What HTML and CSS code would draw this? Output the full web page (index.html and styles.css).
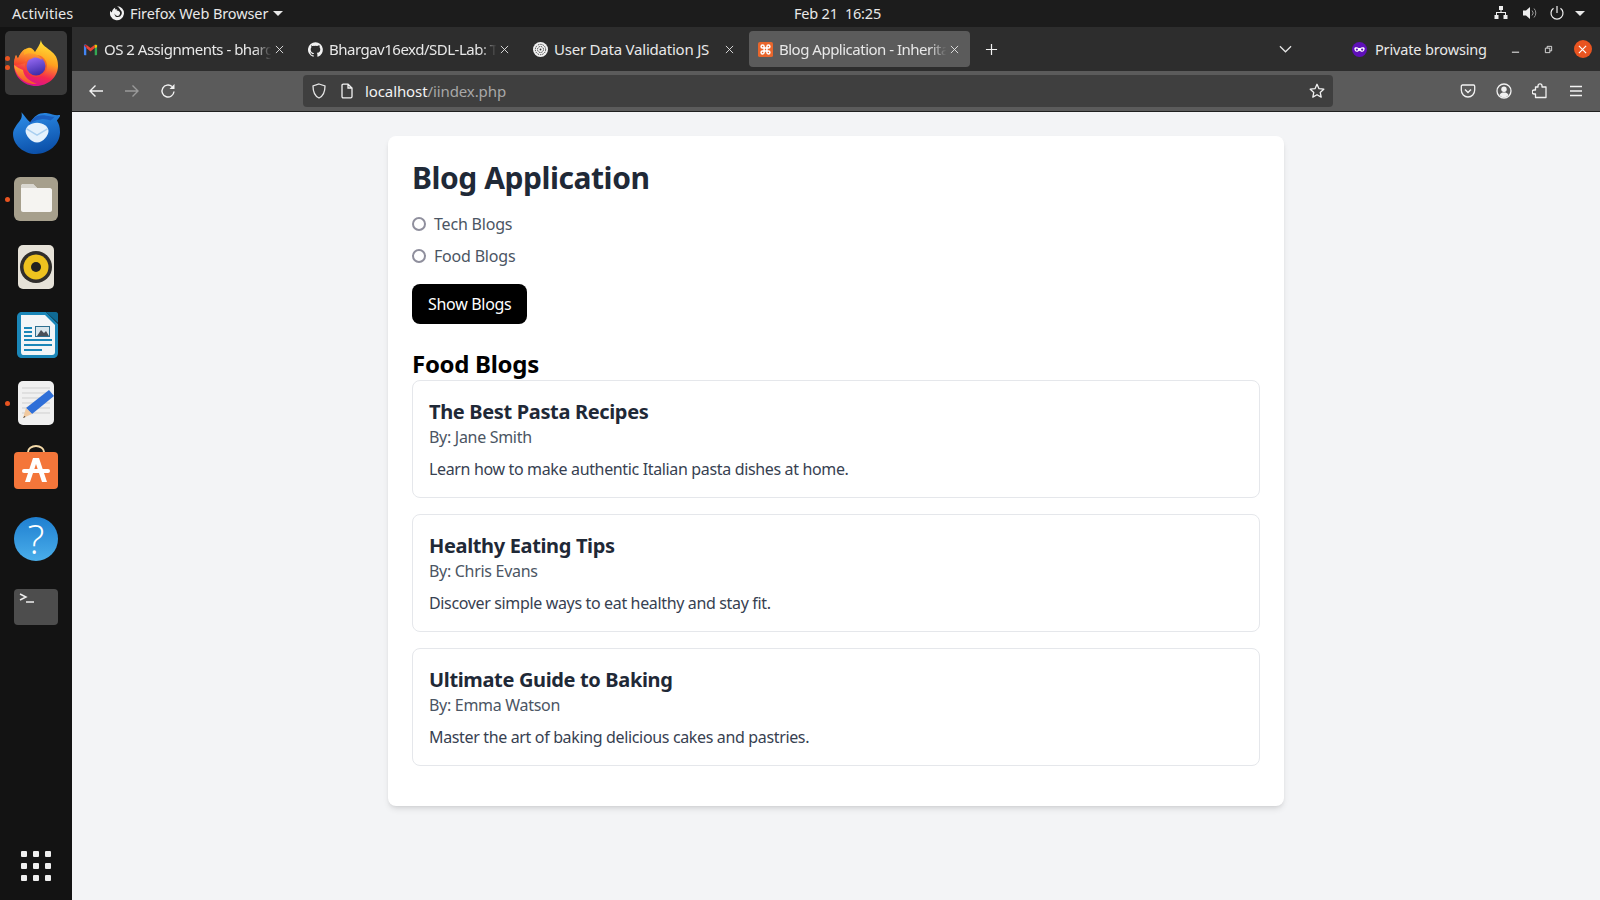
FILE: index.html
```html
<!DOCTYPE html>
<html lang="en">
<head>
  <meta charset="UTF-8">
  <meta name="viewport" content="width=device-width, initial-scale=1.0">
  <title>Blog Application</title>
  <link rel="stylesheet" href="styles.css">
</head>
<body>

  <!-- Ubuntu top bar -->
  <header class="topbar">
    <span class="activities">Activities</span>
    <span class="app-menu">
      <svg class="app-icon" viewBox="0 0 16 16"><path fill="#f2f2f2" d="M8 1.200a7 7 0 1 1-6.600 4.600c.3.900.8 1.400 1.500 1.700C2.900 5.600 4 3.400 6.400 2.400 6 3.200 6 3.900 6.300 4.500c.8-.4 1.700-.5 2.400-.2-.5.100-1 .4-1.300.8.4.5 1.100.7 1.900.6a2.700 2.700 0 1 1-3.600 2.900C5.400 11 7 12 8.600 12A4 4 0 0 0 11.400 5C10.700 3.400 9.500 2 8 1.200z"/></svg>
      Firefox Web Browser
      <i class="caret"></i>
    </span>
    <span class="clock">Feb 21&nbsp; 16:25</span>
    <span class="tray">
      <svg class="tray-net" viewBox="0 0 16 16"><path fill="#eee" d="M6 1h4v4H8.500v2H13v3h1.500v4h-4v-4H12V8H4v2h1.500v4h-4v-4H3V7h4.500V5H6z"/></svg>
      <svg class="tray-vol" viewBox="0 0 16 16"><path fill="#eee" d="M1 5.500h3L8 2v12l-4-3.500H1z"/><path fill="none" stroke="#999" d="M10 5.500a3.500 3.500 0 0 1 0 5M12 3.500a6.500 6.500 0 0 1 0 9"/></svg>
      <svg class="tray-power" viewBox="0 0 16 16"><path fill="none" stroke="#eee" stroke-width="1.200" d="M4.500 3.300a6 6 0 1 0 7 0M8 1v7"/></svg>
      <i class="caret"></i>
    </span>
  </header>

  <div class="desktop">

    <!-- Dock -->
    <nav class="dock">
      <div class="dock-item active">
        <i class="dot dot-a"></i><i class="dot dot-b"></i>
        <svg width="48" height="48" viewBox="0 0 48 48">
          <defs>
            <linearGradient id="ffa" x1="0.700" y1="0" x2="0.400" y2="1"><stop offset="0" stop-color="#ffe83a"/><stop offset="0.450" stop-color="#ffa01f"/><stop offset="0.750" stop-color="#f4284f"/><stop offset="1" stop-color="#d60f96"/></linearGradient>
            <linearGradient id="ffb" x1="0.300" y1="0" x2="0.600" y2="1"><stop offset="0" stop-color="#9a6cf5"/><stop offset="1" stop-color="#3a2aa6"/></linearGradient>
            <linearGradient id="ffc" x1="0.500" y1="0" x2="0.200" y2="1"><stop offset="0" stop-color="#ffb82e"/><stop offset="1" stop-color="#f5402c"/></linearGradient>
          </defs>
          <path fill="url(#ffa)" d="M29 1c0 5 7 8 11 12 5 4 6 9 6 14 0 11-10 20-22 20S2 38 2 26c0-4 .5-7 2-10l2 4c2-6 6-10 10-11 3-1 5 1 7 4 2-4 5-7 6-12z"/>
          <circle cx="24" cy="27" r="11" fill="#f1492c" opacity="0.600"/>
          <circle cx="24" cy="27" r="9.500" fill="url(#ffb)"/>
          <path fill="url(#ffc)" d="M2 26c0-4 1-7 2-10l2 4c1-4 4-8 7-10-1 2-1 4-1 6 3-2 7-2 11-1 3 1 6 3 7 6-3-2-6-3-9-2-2 1-4 2-8 2 2 1 2 2 1 3-4 1-8 2-12 2z"/>
          <path fill="url(#ffc)" d="M2 26c1 8 6 15 14 18 3 1 6 1 9 1-8-3-13-7-14-14-3-1-6-3-9-5z"/>
        </svg>
      </div>
      <div class="dock-item">
        <svg width="48" height="48" viewBox="1 2 46 46">
          <defs><linearGradient id="tb" x1="0.200" y1="0" x2="0.500" y2="1"><stop offset="0" stop-color="#2d8ee9"/><stop offset="1" stop-color="#0b4fa8"/></linearGradient></defs>
          <path fill="url(#tb)" d="M10 7c1 4 0 6-2 9-4 5-6 8-6 12 0 10 10 19 22 19s23-9 23-21c0-5-1-8-3-11 2-2 3-4 4-6-4 2-8 0-13-1-7-1-13 2-16 9C15 14 13 10 10 7z"/>
          <path fill="#1b5fc0" d="M17 19c3-7 9-10 15-9 4 .5 7 2 10 1-2 2-3 3-4 4-3-1-6-2-10-1-4 .5-8 2-11 5z"/>
          <path fill="#e4f1fc" d="M14 25c0-4 5-8 11-8s11 4 11 8-5 11-11 11-11-7-11-11z"/>
          <path fill="none" stroke="#a9cff0" stroke-width="1.500" d="M15 23l10 6 10-6"/>
        </svg>
      </div>
      <div class="dock-item">
        <i class="dot dot-c"></i>
        <svg width="48" height="48" viewBox="0 0 48 48">
          <rect x="2" y="2" width="44" height="44" rx="6" fill="#a69f8c"/>
          <path fill="#f5f4f1" d="M9 11c0-1 1-2 2-2h10l4 4h13c1 0 2 1 2 2v20c0 1-1 2-2 2H11c-1 0-2-1-2-2z"/>
          <path fill="#d9d7d0" d="M9 13h16l-4-4H11c-1 0-2 1-2 2z"/>
        </svg>
      </div>
      <div class="dock-item">
        <svg width="48" height="48" viewBox="0 0 48 48">
          <rect x="6" y="2" width="36" height="44" rx="5" fill="#e6e2d8"/>
          <circle cx="24" cy="24" r="16" fill="#302e2b"/>
          <circle cx="24" cy="24" r="12.500" fill="#eec21f"/>
          <circle cx="24" cy="24" r="5" fill="#232220"/>
        </svg>
      </div>
      <div class="dock-item">
        <svg width="48" height="48" viewBox="0 0 48 48">
          <path fill="#1a86b8" d="M10 1h24l12 12v29c0 3-2 5-5 5H10c-3 0-5-2-5-5V6c0-3 2-5 5-5z"/>
          <path fill="#f2f5f7" d="M9 4h24l10 10v27c0 2-1 3-3 3H11c-1 0-2-1-2-3z"/>
          <path fill="#0f6a94" d="M34 1h10c1 0 2 1 2 2v9z"/>
          <path fill="#1a86b8" d="M12 16h8v2h-8zM12 20h8v2h-8zM12 24h8v2h-8zM12 28h28v2H12zM12 33h28v2H12zM12 38h18v2H12z"/>
          <rect x="23" y="15" width="15" height="11" fill="#2d6f90"/>
          <rect x="24" y="16" width="13" height="9" fill="#d9e6ec"/>
          <path fill="#4a5058" d="M25 25l4-6 3 3 2-2 3 5z"/>
        </svg>
      </div>
      <div class="dock-item">
        <i class="dot dot-c"></i>
        <svg width="48" height="48" viewBox="0 0 48 48">
          <rect x="6" y="2" width="36" height="44" rx="5" fill="#f0f0f0"/>
          <path stroke="#cfcfcf" stroke-width="1" d="M10 9h28M10 14h28M10 19h28M10 24h28M10 29h28M10 34h28"/>
          <path fill="#2f6fd8" d="M37 11l5 6-22 18-6-6z"/>
          <path fill="#f0c9a0" d="M14 29l6 6-9 4z"/>
          <path fill="#333" d="M12.500 37l-1.500 2 2.500-1z"/>
        </svg>
      </div>
      <div class="dock-item">
        <svg class="store-icon" width="48" height="48" viewBox="0 4 48 48">
          <path fill="none" stroke="#f4d9a8" stroke-width="2" d="M16 13V9a8 6 0 0 1 16 0v4"/>
          <rect x="2" y="9" width="44" height="37" rx="4" fill="#f4763a"/>
          <path fill="#fff" d="M21 15h6l8 24h-5l-6-18-6 18h-5z"/>
          <rect x="10" y="26" width="28" height="4" rx="2" fill="#fff"/>
        </svg>
      </div>
      <div class="dock-item">
        <span class="help-icon">?</span>
      </div>
      <div class="dock-item">
        <svg width="48" height="48" viewBox="0 0 48 48">
          <rect x="2" y="6" width="44" height="36" rx="4" fill="#4d4d4d"/>
          <path fill="none" stroke="#eee" stroke-width="1.500" d="M8 11l6 3-6 3M14 19h8"/>
        </svg>
      </div>
      <div class="dock-apps">
        <i></i><i></i><i></i><i></i><i></i><i></i><i></i><i></i><i></i>
      </div>
    </nav>

    <!-- Browser window -->
    <div class="browser">
      <div class="tabbar">
        <div class="tab">
          <svg class="favicon" viewBox="0 0 16 16">
            <path fill="#4285f4" d="M1 3.500c0-.8 1.500-1.200 2.500-.5V14H1.800c-.5 0-.8-.3-.8-.8z"/>
            <path fill="#34a853" d="M12.500 3c1-.7 2.500-.3 2.500.5v9.700c0 .5-.3.800-.8.800h-1.700z"/>
            <path fill="#ea4335" d="M3.500 3L8 6.500 12.500 3v3.400L8 10 3.500 6.400z"/>
            <path fill="#c5221f" d="M1 3.500l2.500 2.900v-3.400z"/>
            <path fill="#fbbc04" d="M12.500 3L15 3.500l0 2-2.500 1z"/>
          </svg>
          <span class="tab-title">OS 2 Assignments - bharg</span>
          <svg class="tab-close" viewBox="0 0 10 10"><path stroke="#e8e8e8" d="M1 1l8 8M9 1l-8 8"/></svg>
        </div>
        <div class="tab">
          <svg class="favicon" viewBox="0 0 16 16"><path fill="#f2f2f2" d="M8 .2a8 8 0 0 0-2.500 15.600c.4.100.5-.2.500-.4v-1.400c-2.200.5-2.700-1-2.700-1-.4-.9-.9-1.200-.9-1.200-.7-.5.100-.5.100-.5.800.1 1.200.8 1.200.8.700 1.200 1.900.9 2.300.7.100-.5.300-.9.500-1.100-1.800-.2-3.600-.9-3.600-4 0-.9.300-1.600.8-2.100-.1-.2-.4-1 .1-2.100 0 0 .7-.2 2.200.8a7.600 7.600 0 0 1 4 0c1.500-1 2.200-.8 2.200-.8.400 1.100.2 1.900.1 2.100.5.600.8 1.300.8 2.100 0 3.100-1.900 3.700-3.700 3.900.3.300.6.700.6 1.500v2.200c0 .2.100.5.600.4A8 8 0 0 0 8 .2z"/></svg>
          <span class="tab-title">Bhargav16exd/SDL-Lab: T</span>
          <svg class="tab-close" viewBox="0 0 10 10"><path stroke="#e8e8e8" d="M1 1l8 8M9 1l-8 8"/></svg>
        </div>
        <div class="tab">
          <svg class="favicon" viewBox="0 0 16 16"><circle cx="8" cy="8" r="8" fill="#f2f2f2"/><circle cx="8" cy="8" r="5.500" fill="none" stroke="#333" stroke-dasharray="1.500 1"/><circle cx="8" cy="8" r="3.200" fill="none" stroke="#333" stroke-dasharray="1.500 1"/><circle cx="8" cy="8" r="1" fill="#333"/></svg>
          <span class="tab-title plain">User Data Validation JS</span>
          <svg class="tab-close" viewBox="0 0 10 10"><path stroke="#e8e8e8" d="M1 1l8 8M9 1l-8 8"/></svg>
        </div>
        <div class="tab current">
          <svg class="favicon" viewBox="0 0 16 16"><rect width="16" height="16" rx="2" fill="#e8662c"/><path fill="none" stroke="#fff" stroke-width="1.600" d="M6.500 6.500H4.800a1.600 1.600 0 1 1 1.700-1.700zM9.500 6.500V4.800a1.600 1.600 0 1 1 1.700 1.700zM6.500 9.500v1.700a1.600 1.600 0 1 1-1.700-1.700zM9.500 9.500h1.700a1.600 1.600 0 1 1-1.700 1.700z"/><path stroke="#fff" stroke-width="1.600" d="M6.500 6.500h3v3h-3z" fill="none"/></svg>
          <span class="tab-title">Blog Application - Inherita</span>
          <svg class="tab-close" viewBox="0 0 10 10"><path stroke="#e8e8e8" d="M1 1l8 8M9 1l-8 8"/></svg>
        </div>
        <svg class="tab-new" viewBox="0 0 14 14"><path stroke="#f2f2f2" stroke-width="1.300" d="M7 1v12M1 7h12"/></svg>
        <svg class="tab-list" viewBox="0 0 14 8"><path fill="none" stroke="#e6e6e6" stroke-width="1.300" d="M1 1l6 6 6-6"/></svg>
        <span class="private">
          <svg class="private-icon" viewBox="0 0 16 16"><circle cx="8" cy="8" r="8" fill="#5e0fb8"/><path fill="#fff" d="M2.500 7c0-1 1-1.500 2-1.500 1.500 0 2.500.8 3.500.8s2-.8 3.500-.8c1 0 2 .5 2 1.500 0 2-1 3.500-2.700 3.500-1.500 0-2-1.300-2.800-1.300s-1.300 1.300-2.800 1.300C3.500 10.500 2.500 9 2.500 7z"/><circle cx="5.200" cy="8" r="1.200" fill="#5e0fb8"/><circle cx="10.800" cy="8" r="1.200" fill="#5e0fb8"/></svg>
          Private browsing
        </span>
        <span class="win-btns">
          <svg class="win-min" viewBox="0 0 10 10"><path stroke="#e6e6e6" stroke-width="1.200" d="M1 8h8"/></svg>
          <svg class="win-max" viewBox="0 0 10 10"><path fill="none" stroke="#e6e6e6" d="M1.500 3.500h5v5h-5zM3.500 3.500v-2h5v5h-2"/></svg>
          <span class="win-close"><svg viewBox="0 0 10 10"><path stroke="#fff" stroke-width="1.300" d="M1 1l8 8M9 1l-8 8"/></svg></span>
        </span>
      </div>

      <div class="toolbar">
        <svg class="tool" viewBox="0 0 16 16"><path fill="none" stroke="#f2f2f2" stroke-width="1.400" d="M15 8H2M7.500 2.500L2 8l5.500 5.500"/></svg>
        <svg class="tool" viewBox="0 0 16 16"><path fill="none" stroke="#9a9a9a" stroke-width="1.400" d="M1 8h13M8.500 2.500L14 8l-5.500 5.500"/></svg>
        <svg class="tool" viewBox="0 0 16 16"><path fill="none" stroke="#f2f2f2" stroke-width="1.400" d="M14 8.500A6 6 0 1 1 12 3.500"/><path fill="#f2f2f2" d="M14.500 1v5h-5z"/></svg>
        <div class="urlbar">
          <svg class="url-shield" viewBox="0 0 16 16"><path fill="none" stroke="#e6e6e6" stroke-width="1.300" d="M8 1l6 2c0 6-1.500 10-6 12C3.500 13 2 9 2 3z"/></svg>
          <svg class="url-page" viewBox="0 0 16 16"><path fill="none" stroke="#f2f2f2" stroke-width="1.300" d="M3 2.500c0-.8.500-1.300 1.300-1.300H9L13 5v8.500c0 .8-.5 1.300-1.300 1.300H4.300c-.8 0-1.300-.5-1.300-1.300zM9 1.200V5h4"/></svg>
          <span class="url-text">localhost<span class="url-path">/iindex.php</span></span>
          <svg class="url-star" viewBox="0 0 16 16"><path fill="none" stroke="#f2f2f2" stroke-width="1.300" stroke-linejoin="round" d="M8 1.300l2 4.400 4.800.5-3.600 3.200 1 4.700L8 11.700l-4.200 2.400 1-4.700L1.200 6.200 6 5.700z"/></svg>
        </div>
        <div class="tool-right">
          <svg class="tool" viewBox="0 0 16 16"><path fill="none" stroke="#f2f2f2" stroke-width="1.300" d="M2.500 2h11c.7 0 1.200.5 1.200 1.200V7c0 4-3 7-6.700 7S1.300 11 1.300 7V3.200C1.300 2.500 1.800 2 2.500 2z"/><path fill="none" stroke="#f2f2f2" stroke-width="1.400" d="M5 6.500l3 3 3-3"/></svg>
          <svg class="tool" viewBox="0 0 16 16"><circle cx="8" cy="8" r="7" fill="none" stroke="#f2f2f2" stroke-width="1.300"/><circle cx="8" cy="6.300" r="2.700" fill="#f2f2f2"/><path fill="#f2f2f2" d="M3.500 12c1-2 2.500-2.500 4.500-2.500s3.500.5 4.500 2.500c-1 1.500-2.500 2.300-4.500 2.300S4.500 13.500 3.500 12z"/></svg>
          <svg class="tool" viewBox="0 0 16 16"><path fill="none" stroke="#f2f2f2" stroke-width="1.300" stroke-linejoin="round" d="M6 4V2.800a2 2 0 0 1 4 0V4h4v10.500H3.500V11H2.200a2 2 0 0 1 0-4h1.300V4z"/></svg>
          <svg class="tool" viewBox="0 0 16 16"><path stroke="#f2f2f2" stroke-width="1.300" d="M2 3.500h12M2 8h12M2 12.500h12"/></svg>
        </div>
      </div>

      <!-- Page content -->
      <main class="page">
        <div class="container">
          <h1>Blog Application</h1>

          <form class="blog-form" onsubmit="return false">
            <label class="radio-row"><input type="radio" name="category"> Tech Blogs</label>
            <label class="radio-row"><input type="radio" name="category"> Food Blogs</label>
            <button class="show-btn">Show Blogs</button>
          </form>

          <h2>Food Blogs</h2>

          <article class="blog-card">
            <h3>The Best Pasta Recipes</h3>
            <p class="author">By: Jane Smith</p>
            <p class="summary">Learn how to make authentic Italian pasta dishes at home.</p>
          </article>
          <article class="blog-card">
            <h3>Healthy Eating Tips</h3>
            <p class="author">By: Chris Evans</p>
            <p class="summary">Discover simple ways to eat healthy and stay fit.</p>
          </article>
          <article class="blog-card">
            <h3>Ultimate Guide to Baking</h3>
            <p class="author">By: Emma Watson</p>
            <p class="summary">Master the art of baking delicious cakes and pastries.</p>
          </article>
        </div>
      </main>
    </div>
  </div>

</body>
</html>
```

FILE: styles.css
```css
* {
  box-sizing: border-box;
}

html, body {
  height: 100%;
}

body {
  margin: 0;
  display: flex;
  flex-direction: column;
  overflow: hidden;
  font-family: "Noto Sans", "Open Sans", sans-serif;
  background-color: #131313;
}

svg {
  display: block;
  flex: none;
}

/* Top bar */
.topbar {
  height: 27px;
  flex: none;
  display: flex;
  align-items: center;
  padding: 0 0 1px 12px;
  background-color: #1c1c1c;
  color: #e8e8e8;
  font-size: 14.5px;
  letter-spacing: -0.2px;
}

.activities {
  width: 97px;
  letter-spacing: 0.1px;
}

.app-menu {
  width: 685px;
  display: flex;
  align-items: center;
  gap: 5px;
  letter-spacing: -0.1px;
}

.app-icon {
  width: 16px;
  height: 16px;
}

.caret {
  width: 0;
  height: 0;
  border-left: 5px solid transparent;
  border-right: 5px solid transparent;
  border-top: 5px solid #e8e8e8;
}

.clock {
  flex: 1;
}

.tray {
  display: flex;
  align-items: center;
  padding-right: 15px;
}

.tray svg {
  width: 16px;
  height: 16px;
  margin-right: 13px;
}

.tray .tray-vol {
  margin-right: 11px;
}

.tray .tray-power {
  margin-right: 10px;
}

/* Dock */
.desktop {
  flex: 1;
  display: flex;
  min-height: 0;
}

.dock {
  width: 72px;
  flex: none;
  display: flex;
  flex-direction: column;
  align-items: center;
  padding-top: 2px;
  background-color: #131313;
}

.dock-item {
  position: relative;
  width: 62px;
  height: 68px;
  display: flex;
  align-items: center;
  justify-content: center;
  border-radius: 5px;
}

.dock-item.active {
  height: 64px;
  margin: 2px 0;
  background-color: #3a3a3a;
}

.store-icon {
  overflow: visible;
}

.dot {
  position: absolute;
  left: 0;
  width: 5px;
  height: 5px;
  border-radius: 50%;
  background-color: #e95420;
}

.dot-a { top: 25px; }
.dot-b { top: 34px; }
.dot-c { top: 32px; }

.help-icon {
  width: 44px;
  height: 44px;
  display: flex;
  align-items: center;
  justify-content: center;
  border-radius: 50%;
  background: linear-gradient(#1f7fd0, #4aaeea);
  color: white;
  font-family: "Open Sans", sans-serif;
  font-size: 40px;
  font-weight: 300;
  line-height: 44px;
}

.dock-apps {
  margin-top: auto;
  margin-bottom: 19px;
  display: grid;
  grid-template-columns: repeat(3, 6px);
  gap: 6px;
}

.dock-apps i {
  width: 6px;
  height: 6px;
  border-radius: 1px;
  background-color: #eee;
}

/* Browser tabs */
.browser {
  flex: 1;
  display: flex;
  flex-direction: column;
  min-width: 0;
}

.tabbar {
  height: 44px;
  flex: none;
  display: flex;
  align-items: center;
  background-color: #2d2d2d;
  color: #e8e8e8;
  font-size: 15px;
  letter-spacing: -0.5px;
}

.tab {
  width: 221px;
  height: 36px;
  margin: 0 2px;
  flex: none;
  display: flex;
  align-items: center;
  padding: 0 9px;
  border-radius: 4px;
}

.tab.current {
  background-color: #5b5b5b;
}

.favicon {
  width: 15px;
  height: 15px;
  margin-right: 6px;
}

.tab-title {
  flex: 1;
  min-width: 0;
  white-space: nowrap;
  -webkit-mask-image: linear-gradient(to right, #000 88%, transparent 98%);
  mask-image: linear-gradient(to right, #000 88%, transparent 98%);
}

.tab-title.plain {
  letter-spacing: -0.22px;
  -webkit-mask-image: none;
  mask-image: none;
}

.tab-close {
  width: 9px;
  height: 9px;
  margin-right: 2px;
}

.tab-new {
  width: 13px;
  height: 13px;
  margin-left: 13px;
}

.tab-list {
  width: 13px;
  height: 8px;
  margin-left: 281px;
}

.private {
  margin-left: 60px;
  display: flex;
  align-items: center;
  gap: 8px;
  font-size: 14.5px;
  letter-spacing: -0.15px;
}

.private-icon {
  width: 15px;
  height: 15px;
}

.win-btns {
  margin-left: 24px;
  display: flex;
  align-items: center;
}

.win-min, .win-max {
  width: 9px;
  height: 9px;
}

.win-max {
  margin-left: 24px;
}

.win-close {
  margin-left: 21px;
  width: 18px;
  height: 18px;
  display: flex;
  align-items: center;
  justify-content: center;
  border-radius: 50%;
  background-color: #e95420;
}

.win-close svg {
  width: 9px;
  height: 9px;
}

/* Browser toolbar */
.toolbar {
  height: 41px;
  flex: none;
  display: flex;
  align-items: center;
  padding: 0 0 1px 16px;
  background-color: #5b5b5b;
  border-bottom: 1px solid #1f1f1f;
}

.tool {
  width: 16px;
  height: 16px;
  margin-right: 20px;
}

.urlbar {
  width: 1030px;
  flex: none;
  height: 32px;
  margin-left: 107px;
  display: flex;
  align-items: center;
  padding: 0 8px 0 8px;
  border-radius: 4px;
  background-color: #3f3f3f;
  color: #f2f2f2;
  font-size: 15px;
  letter-spacing: -0.1px;
}

.url-shield, .url-page {
  width: 16px;
  height: 16px;
}

.url-page {
  margin-left: 12px;
  margin-right: 10px;
}

.url-text {
  flex: 1;
}

.url-path {
  color: #a8a8a8;
}

.url-star {
  width: 16px;
  height: 16px;
}

.tool-right {
  display: flex;
  margin-left: 127px;
}

.tool-right .tool:last-child {
  margin-right: 0;
}

/* Page */
.page {
  flex: 1;
  min-height: 0;
  padding-top: 24px;
  background-color: #f3f4f6;
}

.container {
  width: 896px;
  margin: 0 auto;
  padding: 24px;
  background-color: white;
  border-radius: 8px;
  box-shadow: 0 4px 6px -1px rgba(0, 0, 0, 0.1), 0 2px 4px -2px rgba(0, 0, 0, 0.1);
  padding-bottom: 40px;
}

h1 {
  margin: 0 0 16px;
  font-size: 30px;
  line-height: 36px;
  font-weight: 700;
  letter-spacing: -0.45px;
  color: #1f2937;
}

.blog-form {
  margin-bottom: 24px;
}

.radio-row {
  display: flex;
  align-items: center;
  gap: 8px;
  height: 24px;
  margin-bottom: 8px;
  font-size: 16px;
  letter-spacing: -0.2px;
  color: #4b5563;
}

.radio-row input {
  width: 14px;
  height: 14px;
  margin: 0;
  appearance: none;
  border: 2px solid #8f8f9d;
  border-radius: 50%;
  background-color: white;
}

.show-btn {
  display: block;
  height: 40px;
  margin-top: 16px;
  padding: 0 16px;
  background-color: black;
  color: white;
  border: none;
  border-radius: 8px;
  font-family: inherit;
  font-size: 16px;
  letter-spacing: -0.3px;
}

h2 {
  margin: 0;
  font-size: 24px;
  line-height: 32px;
  font-weight: 700;
  letter-spacing: -0.3px;
  color: black;
}

.blog-card {
  height: 118px;
  margin-bottom: 16px;
  padding: 17px 16px 16px;
  border: 1px solid #e5e7eb;
  border-radius: 8px;
}

.blog-card:last-child {
  margin-bottom: 0;
}

h3 {
  margin: 0;
  font-size: 20px;
  line-height: 27px;
  font-weight: 700;
  letter-spacing: -0.35px;
  color: #1f2937;
}

.author {
  margin: 0 0 8px;
  font-size: 16px;
  line-height: 24px;
  letter-spacing: -0.3px;
  color: #4b5563;
}

.summary {
  margin: 0;
  font-size: 16px;
  line-height: 24px;
  letter-spacing: -0.35px;
  color: #374151;
}
```
